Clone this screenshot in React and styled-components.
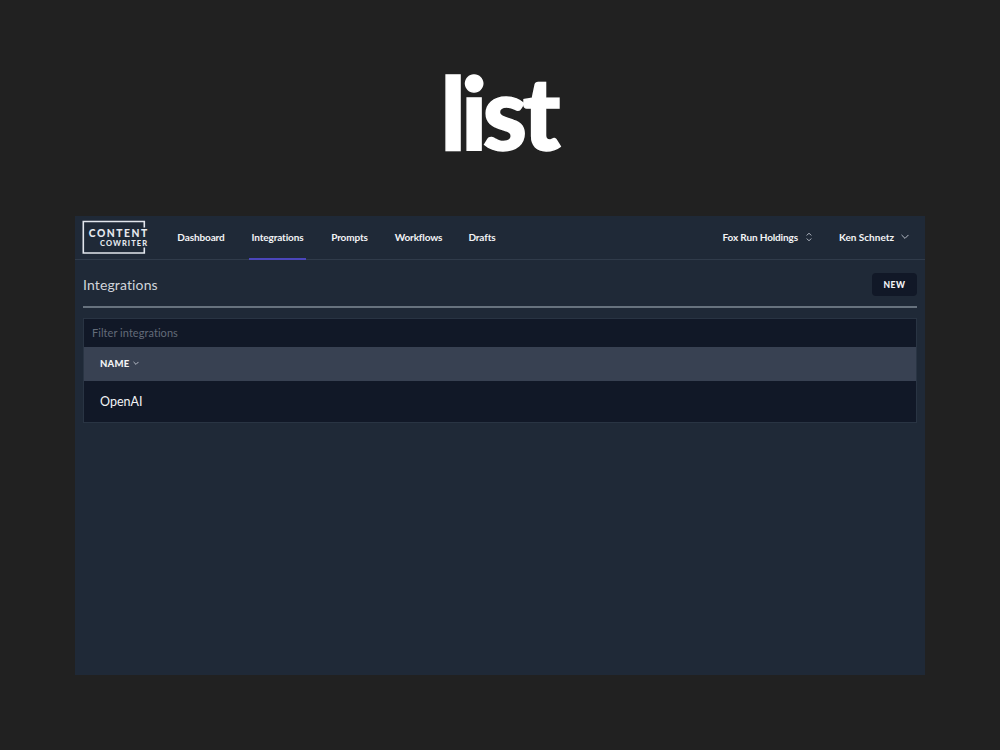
import React from "react";
import styled, { createGlobalStyle } from "styled-components";

const GlobalStyle = createGlobalStyle`
  * {
    box-sizing: border-box;
  }
  body {
    margin: 0;
    background-color: #212121;
    font-family: "Lato", "Liberation Sans", sans-serif;
  }
`;

const Container = styled.div`
  height: 750px;
  display: flex;
  flex-direction: column;
  align-items: center;
  overflow: hidden;
`;

const Title = styled.h1`
  height: 216px;
  margin: 0;
  padding-top: 49px;
  padding-right: 4px;
  color: white;
  font-size: 101px;
  font-weight: 900;
  line-height: 124px;
  letter-spacing: -4.8px;
  -webkit-text-stroke: 1.4px white;
`;

const Panel = styled.div`
  width: 850px;
  height: 459px;
  background-color: #1f2937;
`;

const Nav = styled.nav`
  display: flex;
  height: 44px;
  padding: 0 16px 0 7px;
  border-bottom: 1px solid #303b4a;
`;

const Logo = styled.svg`
  width: 68px;
  height: 36px;
  margin-top: 4px;
  flex-shrink: 0;
`;

const Links = styled.div`
  display: flex;
  gap: 22px;
  margin-left: 25px;
`;

const Link = styled.a`
  height: 44px;
  width: ${({ $width }) => $width}px;
  text-align: center;
  white-space: nowrap;
  color: #f3f4f6;
  font-size: 10px;
  font-weight: 700;
  line-height: 42px;
  letter-spacing: -0.12px;
  border-bottom: 2px solid ${({ $active }) => ($active ? "#4b46bb" : "transparent")};
`;

const Menus = styled.div`
  display: flex;
  gap: 26px;
  margin-left: auto;
`;

const Menu = styled.div`
  display: flex;
  align-items: center;
  gap: 7px;
  height: 42px;
  color: #f3f4f6;
  font-size: 10px;
  font-weight: 700;
  letter-spacing: ${({ $spacing }) => $spacing || 0}px;
  white-space: nowrap;
`;

const Icon = styled.svg`
  fill: none;
  stroke: #b5bbc6;
  stroke-width: 1;
  stroke-linecap: round;
  stroke-linejoin: round;
`;

const Content = styled.main`
  padding: 0 8px;
`;

const Header = styled.div`
  display: flex;
  align-items: center;
  justify-content: space-between;
  height: 48px;
  padding-top: 2px;
  border-bottom: 2px solid #67727e;
`;

const Heading = styled.h2`
  margin: 0;
  color: #d1d5db;
  font-size: 14px;
  font-weight: 400;
  letter-spacing: 0.13px;
`;

const Button = styled.button`
  width: 45px;
  height: 23px;
  padding: 1px 0 0;
  border: 0;
  border-radius: 4px;
  background-color: #111827;
  color: #f3f4f6;
  font-family: inherit;
  font-size: 8.5px;
  font-weight: 900;
  letter-spacing: 0.6px;
`;

const Table = styled.div`
  height: 105px;
  margin-top: 10px;
  border: 1px solid #293443;
  background-color: #111827;
`;

const Filter = styled.input`
  display: block;
  width: 100%;
  height: 28px;
  padding: 0 8px 2px;
  border: 0;
  background: transparent;
  color: white;
  font-family: inherit;
  font-size: 11px;
  letter-spacing: 0.05px;
  &::placeholder {
    color: #636b79;
    opacity: 1;
  }
`;

const Head = styled.div`
  display: flex;
  align-items: center;
  gap: 4px;
  height: 34px;
  padding: 0 16px 1px;
  background-color: #384152;
  color: #f3f4f6;
  font-size: 9.5px;
  font-weight: 900;
  letter-spacing: 0.2px;
`;

const Row = styled.div`
  height: 41px;
  padding-left: 16px;
  color: #f3f4f6;
  font-size: 12.5px;
  line-height: 42px;
`;

const links = [
  { name: "Dashboard", width: 52 },
  { name: "Integrations", width: 57, active: true },
  { name: "Prompts", width: 43 },
  { name: "Workflows", width: 51 },
  { name: "Drafts", width: 32 },
];

const App = () => {
  return (
    <>
      <GlobalStyle />
      <Container>
        <Title>list</Title>
        <Panel>
          <Nav>
            <Logo viewBox="0 0 68 36">
              <path
                d="M62.3 7.5V1.5H1.3V33H62.3V27.5"
                fill="none"
                stroke="#e2e6ed"
                strokeWidth="1.6"
              />
              <g fill="#e5e8ee" fontFamily="Lato, sans-serif" fontWeight="900">
                <text x="6.8" y="16.8" fontSize="10.3" textLength="58.5">
                  CONTENT
                </text>
                <text x="18" y="25.6" fontSize="7.5" textLength="47">
                  COWRITER
                </text>
              </g>
            </Logo>
            <Links>
              {links.map((link) => (
                <Link key={link.name} $width={link.width} $active={link.active}>
                  {link.name}
                </Link>
              ))}
            </Links>
            <Menus>
              <Menu $spacing={-0.14}>
                Fox Run Holdings
                <Icon width="8" height="10" viewBox="0 0 8 10">
                  <path d="M2 3.2L4 1.2L6 3.2M2 6.8L4 8.8L6 6.8" />
                </Icon>
              </Menu>
              <Menu>
                Ken Schnetz
                <Icon width="8" height="6" viewBox="0 0 8 6">
                  <path d="M0.8 1.2L4 4.4L7.2 1.2" />
                </Icon>
              </Menu>
            </Menus>
          </Nav>
          <Content>
            <Header>
              <Heading>Integrations</Heading>
              <Button>NEW</Button>
            </Header>
            <Table>
              <Filter placeholder="Filter integrations" />
              <Head>
                NAME
                <Icon width="6" height="5" viewBox="0 0 6 5">
                  <path d="M0.8 1.2L3 3.4L5.2 1.2" />
                </Icon>
              </Head>
              <Row>OpenAI</Row>
            </Table>
          </Content>
        </Panel>
      </Container>
    </>
  );
};

export default App;
